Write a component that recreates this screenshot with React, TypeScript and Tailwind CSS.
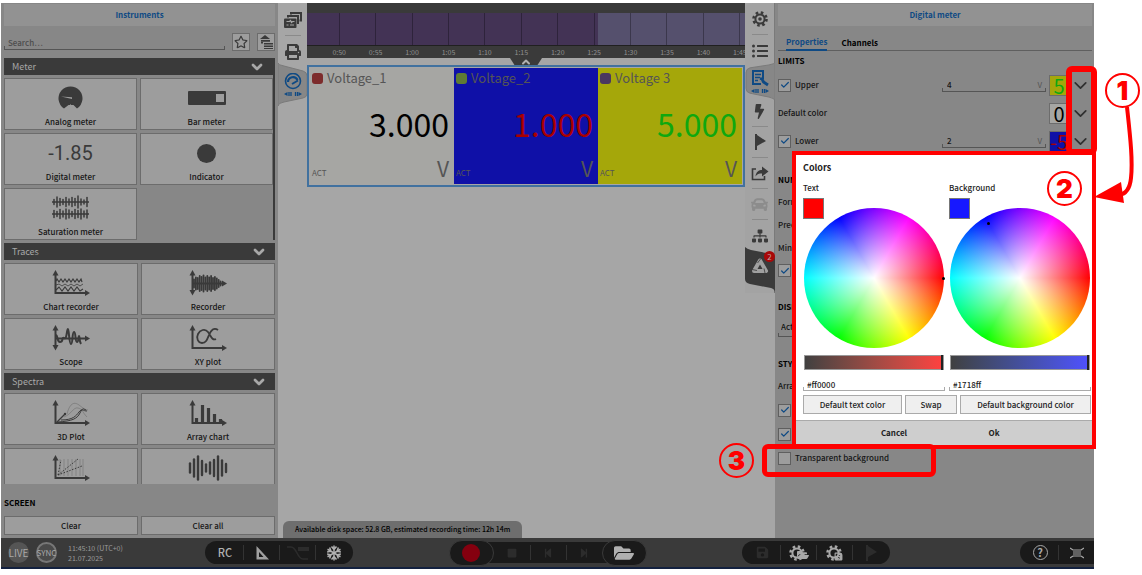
import { useState, type ReactNode } from "react";
import {
  FaBolt,
  FaCar,
  FaFolderOpen,
  FaListUl,
  FaPrint,
  FaRegStar,
  FaSave,
  FaSitemap,
  FaSquare,
  FaStepBackward,
  FaStepForward,
} from "react-icons/fa";
import { Check, ChevronDown, ChevronUp } from "lucide-react";

/* ------------------------------------------------------------------ */
/* Data                                                               */
/* ------------------------------------------------------------------ */

interface Instrument {
  name: string;
  icon: ReactNode;
  iconOnly?: boolean;
}

const TIMES = ["0:50", "0:55", "1:00", "1:05", "1:10", "1:15", "1:20", "1:25", "1:30", "1:35", "1:40", "1:45"];

const METERS = [
  { name: "Voltage_1", value: "3.000", panel: "bg-[#a6a6a3]", text: "text-black", dot: "bg-[#7d2c2c]" },
  { name: "Voltage_2", value: "1.000", panel: "bg-[#0f10a7]", text: "text-[#a80000]", dot: "bg-[#5f7b33]" },
  { name: "Voltage 3", value: "5.000", panel: "bg-[#a5a70a]", text: "text-[#0fa80f]", dot: "bg-[#4a3760]" },
];

const WHEEL =
  "bg-[radial-gradient(closest-side,#ffffff,#ffffff00),conic-gradient(from_90deg,#ff0000,#ffff00,#00ff00,#00ffff,#0000ff,#ff00ff,#ff0000)]";

// underline with short upright ends
const FIELD =
  "bg-no-repeat bg-[linear-gradient(#555555,#555555),linear-gradient(#555555,#555555),linear-gradient(#555555,#555555)] [background-size:1px_4px,1px_4px,100%_1px] [background-position:left_bottom,right_bottom,left_bottom]";
const FIELD_LIGHT =
  "bg-no-repeat bg-[linear-gradient(#aaaaaa,#aaaaaa),linear-gradient(#aaaaaa,#aaaaaa),linear-gradient(#aaaaaa,#aaaaaa)] [background-size:1px_4px,1px_4px,100%_1px] [background-position:left_bottom,right_bottom,left_bottom]";

/* ------------------------------------------------------------------ */
/* Icons                                                              */
/* ------------------------------------------------------------------ */

const Axes = ({ children, down }: { children?: ReactNode; down?: boolean }) => (
  <svg viewBox="0 0 38 26" className="w-[38px] h-[26px]" fill="none" stroke="#3a3a3a" strokeWidth="1.6">
    <path d={down ? "M3.500 3V22M3 13.500H34" : "M3.500 3V23H34"} strokeWidth="2" />
    <path d="M.5 5.500l3-5.500 3 5.500z" fill="#3a3a3a" stroke="none" />
    {down && <path d="M.5 20l3 5.500 3-5.500z" fill="#3a3a3a" stroke="none" />}
    <path d={down ? "M33 10.500l5 3-5 3z" : "M33 20l5 3-5 3z"} fill="#3a3a3a" stroke="none" />
    {children}
  </svg>
);

const Bars = ({ heights, cy, step = 4, width = 2.5 }: { heights: number[]; cy: number; step?: number; width?: number }) => (
  <>
    {heights.map((h, i) => (
      <path key={i} d={`M${2 + i * step} ${cy - h / 2}v${h}`} strokeWidth={width} strokeLinecap="round" />
    ))}
  </>
);

const AnalogIcon = () => (
  <svg viewBox="0 0 26 26" className="w-[26px] h-[26px]">
    <path d="M6 23.500A12 12 0 1 1 19 23.500L15.500 20l-2.500 0-2.500 0z" fill="#3a3a3a" />
    <path d="M8.500 26l4-7 4.500 7z" fill="#9d9d9d" />
    <path d="M3 11.500l11 .8v1.800z" fill="#9d9d9d" />
  </svg>
);

const BarIcon = () => (
  <svg viewBox="0 0 38 14" className="w-[38px] h-[14px]">
    <rect width="38" height="14" rx="1" fill="#3a3a3a" />
    <rect x="28" y="3" width="8" height="8" fill="#9d9d9d" />
  </svg>
);

const SaturationIcon = () => (
  <svg viewBox="0 0 38 26" className="w-[38px] h-[26px]" stroke="#3a3a3a">
    <path d="M0 7h37M0 19h37" strokeWidth="1.4" />
    <Bars heights={[5, 10, 7, 5, 9, 6, 9, 7, 12, 6, 4, 9]} cy={7} step={3} width={1.5} />
    <Bars heights={[7, 5, 9, 6, 10, 8, 5, 9, 7, 10, 6, 8]} cy={19} step={3} width={1.5} />
  </svg>
);

const ChartIcon = () => (
  <Axes>
    <path d="M4 11l1-2 2 3 2-3 2 3 2-3 2 3 2-3 2 3 2-3 2 3 2-3 2 3 2-3 1 3" strokeWidth="1.2" />
    <path d="M4 15l3-1 3 2 3-2 3 2 3-2 3 2 3-2 3 2 3-2" strokeWidth=".8" />
    <path d="M4 20l3-3 3 4 3-4 3 4 3-4 3 4 3-4 3 4 3-2" strokeWidth="1.1" />
  </Axes>
);

const RecorderIcon = () => (
  <Axes down>
    <g transform="translate(3 0)">
      <Bars heights={[8, 12, 11, 15, 13, 16, 12, 15, 12, 15, 11, 13, 10, 7, 4]} cy={13.5} step={1.9} width={1.8} />
    </g>
  </Axes>
);

const ScopeIcon = () => (
  <Axes down>
    <path d="M4 10c2 1 1 7 4 7s2-3 3-4 2 2 3-1 1-8 2-8 1 15 3 15 1-12 3-12 1 10 3 10 1-6 2-6 0 5 2 8" strokeWidth="2" />
  </Axes>
);

const XyIcon = () => (
  <Axes>
    <path d="M29 5c-4-3-7 0-9 5s-3 8-7 8-6-5-4-9 7-6 10-2 4 9 8 7" strokeWidth="1.8" />
  </Axes>
);

const PlotIcon = () => (
  <Axes>
    <path d="M4 23l9-9" strokeWidth="1.200" />
    <circle cx="13" cy="14" r="1.200" fill="#3a3a3a" stroke="none" />
    <path d="M6 22c14-1 19-3 22-9s3-4 6-3M9 20c12 0 15-4 18-8s4-1 8-1" strokeWidth="1" />
    <path d="M15 14c3-12 8-12 12-9s6 5 9 5M12 17c8-3 9-10 14-9s4 4 9 9" strokeWidth=".6" opacity=".45" />
  </Axes>
);

const ArrayIcon = () => (
  <Axes>
    <path d="M7.500 22v-4M13.500 22V5M19.500 22V8M25.500 22v-8M31.500 22v-3" strokeWidth="3.200" />
  </Axes>
);

const SpectrogramIcon = () => (
  <Axes>
    <path d="M8 4v17M12 4v17M16 4v17M20 4v17M24 4v17M28 4v17M31 4v17" strokeWidth=".5" opacity=".5" />
    <path d="M6 20l20-16M6 20l24-9M6 20L9 5" strokeWidth="1" strokeDasharray="1.500 1.500" />
  </Axes>
);

const WaveIcon = () => (
  <svg viewBox="0 0 40 26" className="w-10 h-[26px]" stroke="#3a3a3a">
    <Bars heights={[9, 17, 23, 14, 7, 11, 16, 23, 15, 8]} cy={13} step={4} width={2.4} />
  </svg>
);

const GearIcon = ({ dot }: { dot?: boolean }) => (
  <svg viewBox="0 0 16 16" className="size-4" fill="none" stroke="currentColor">
    <circle cx="8" cy="8" r="6.500" strokeWidth="2.600" strokeDasharray="2.550 2.555" />
    <circle cx="8" cy="8" r="4.600" strokeWidth="2" />
    {dot && <circle cx="8" cy="8" r="1.800" fill="currentColor" stroke="none" />}
  </svg>
);

const WindowsIcon = () => (
  <svg viewBox="0 0 18 16" className="w-[18px] h-4 shrink-0" fill="none" stroke="#3a3a3a" strokeWidth="2">
    <path d="M7 2.500V1h10v7.500h-1.500M4 5.500V4h10V11H13" />
    <rect x="0" y="6.500" width="12.500" height="9.500" rx="1" fill="#3a3a3a" stroke="none" />
    <path d="M2.500 9.500h3l1-1 1 2 1-1h2M2.500 13h2M6 13h4" stroke="#a6a6a6" strokeWidth="1.200" />
  </svg>
);

const GaugeIcon = () => (
  <svg viewBox="0 0 18 24" className="w-[18px] h-6" fill="none" stroke="#0f4a84">
    <circle cx="9" cy="8" r="7.500" strokeWidth="1.600" />
    <path d="M4 9a5 5 0 0 1 9.500-2" strokeWidth="2.200" />
    <path d="M8 11l6-3.500" strokeWidth="2" />
    <path d="M0 21l3.500-2v4zM18 21l-3.500-2v4z" fill="#0f4a84" stroke="none" />
    <path d="M5 19v4M7 19v4M11.500 19v4M13.500 19v4" strokeWidth="1.300" />
  </svg>
);

const FormIcon = () => (
  <svg viewBox="0 0 18 24" className="w-[18px] h-6" fill="none" stroke="#0f4a84">
    <path d="M12 9V1H2v13h8" strokeWidth="2" />
    <path d="M4 4.500h6M4 7.500h5M4 10.500h3" strokeWidth="1.400" />
    <path d="M9 8.500l2 .5 1.500 3 4.500 3" strokeWidth="2.800" />
    <path d="M0 21l3.500-2v4zM18 21l-3.500-2v4z" fill="#0f4a84" stroke="none" />
    <path d="M5 19v4M7 19v4M11.500 19v4M13.500 19v4" strokeWidth="1.300" />
  </svg>
);

const FlagIcon = () => (
  <svg viewBox="0 0 12 16" className="h-4 w-3" fill="currentColor">
    <path d="M1 0h2v16H1zM3 1l9 6-9 5z" />
  </svg>
);

const ShareIcon = () => (
  <svg viewBox="0 0 18 16" className="w-[18px] h-4 shrink-0" fill="none" stroke="#3a3a3a">
    <path d="M5 4H1.500v10.500h12V11" strokeWidth="1.600" />
    <path d="M4.500 11.500C5 6.500 8 5 11 5V1.500l6.500 5-6.500 5V8.500c-3 0-5 .5-6.500 3z" fill="#3a3a3a" stroke="none" />
  </svg>
);

const TriangleIcon = () => (
  <svg viewBox="0 0 14 14" className="size-3.5" fill="#a0a0a0" fillRule="evenodd">
    <path d="M1.500 0L14 13.500H1.500zM4 6v5h4.500z" />
  </svg>
);

const FilterIcon = () => (
  <svg viewBox="0 0 22 14" className="w-[22px] h-3.5" fill="none" stroke="#2c2c2c">
    <path d="M0 1h4c6 0 6 12 12 12h5" strokeWidth="1.500" />
    <path d="M11 3h11" strokeWidth="4" />
  </svg>
);

const SnowIcon = () => (
  <svg viewBox="0 0 16 16" className="size-4" fill="none" stroke="#b0b0b0">
    {[0, 60, 120].map((a) => (
      <path key={a} transform={`rotate(${a} 8 8)`} d="M8 .5v15M5.500 1.500L8 4.500l2.500-3M5.500 14.500l2.500-3 2.500 3" strokeWidth="1.500" />
    ))}
  </svg>
);

const LogoIcon = () => (
  <svg viewBox="0 0 18 16" className="w-[18px] h-4" fill="none">
    <path d="M9 2.500L15 13H3z" stroke="#a0a0a0" strokeWidth="4" strokeLinejoin="round" />
    <path d="M9.500 1l-3 4M14 15l-1-4.500M1 11.500l5 1" stroke="#3a3a3a" strokeWidth=".8" />
  </svg>
);

const FrameIcon = () => (
  <svg viewBox="0 0 14 12" className="w-3.5 h-3" fill="none" stroke="#a8a8a8" strokeWidth="1.200">
    <path d="M3 3h8M3 5h8M3 7h8M3 9h8M0 1l3 2M14 1l-3 2M0 11l3-2M14 11l-3-2" />
  </svg>
);

const TreeIcon = () => (
  <svg viewBox="0 0 14 14" className="size-3.5" fill="#3a3a3a">
    <path d="M1 4l5-4 5 4zM2 5h9v1.800H2zM5 8h9v1.500H5zM5 10.500h9V12H5zM5 13h9v1H5zM2 7h2v1.500H2z" />
  </svg>
);

/* ------------------------------------------------------------------ */
/* Instruments panel                                                  */
/* ------------------------------------------------------------------ */

const GROUPS: { title: string; items: Instrument[] }[] = [
  {
    title: "Meter",
    items: [
      { name: "Analog meter", icon: <AnalogIcon /> },
      { name: "Bar meter", icon: <BarIcon /> },
      {
        name: "Digital meter",
        icon: (
          <span className="font-['Liberation_Sans_Narrow','Roboto',sans-serif] text-[20px] leading-5 font-normal text-[#3a3a3a]">
            -1.85
          </span>
        ),
      },
      { name: "Indicator", icon: <span className="size-[19px] rounded-full bg-[#3a3a3a]" /> },
      { name: "Saturation meter", icon: <SaturationIcon /> },
    ],
  },
  {
    title: "Traces",
    items: [
      { name: "Chart recorder", icon: <ChartIcon /> },
      { name: "Recorder", icon: <RecorderIcon /> },
      { name: "Scope", icon: <ScopeIcon /> },
      { name: "XY plot", icon: <XyIcon /> },
    ],
  },
  {
    title: "Spectra",
    items: [
      { name: "3D Plot", icon: <PlotIcon /> },
      { name: "Array chart", icon: <ArrayIcon /> },
      { name: "Spectrogram", icon: <SpectrogramIcon />, iconOnly: true },
      { name: "Waveform", icon: <WaveIcon />, iconOnly: true },
    ],
  },
];

function InstrumentsPanel() {
  const small = "flex size-[18px] items-center justify-center border border-[#6c6c6c] bg-[#9d9d9d] text-[#3a3a3a]";
  return (
    <aside className="flex w-[277px] shrink-0 flex-col bg-[#878787] px-[3px] pt-px pb-[3px] text-[8px] leading-[14px] font-medium text-[#151515]">
      <h2 className="bg-[#929292] text-center leading-[22px] font-bold text-[#0f4a84]">Instruments</h2>
      <div className="mt-[7px] flex items-center gap-[7px]">
        <input
          aria-label="Search"
          placeholder="Search…"
          className={`h-4 min-w-0 flex-1 pl-1 outline-none placeholder:text-[#4c4c4c] ${FIELD}`}
        />
        <button aria-label="Favorites" className={small}>
          <FaRegStar size={14} />
        </button>
        <button aria-label="Collapse" className={small}>
          <TreeIcon />
        </button>
      </div>
      <div className="mt-[7px] flex min-h-0 flex-1 flex-col gap-[3px] overflow-hidden">
        {GROUPS.map((group) => (
          <section
            key={group.title}
            className={`flex shrink-0 flex-col gap-[3px] ${group.title === "Meter" ? "border-r-2 border-[#3a3a3a]" : ""}`}
          >
            <button className="flex h-[17px] items-center justify-between bg-[#3a3a3a] px-2 text-[9px] font-normal text-[#a8a8a8]">
              {group.title}
              <ChevronDown size={16} strokeWidth={4} />
            </button>
            <div className="grid grid-cols-2 gap-[3px]">
              {group.items.map((item) => (
                <button
                  key={item.name}
                  aria-label={item.name}
                  className="flex h-[52px] flex-col items-center gap-[2px] border border-[#6c6c6c] bg-[#9d9d9d] pt-1"
                >
                  <span className="flex h-[30px] items-center">{item.icon}</span>
                  {!item.iconOnly && item.name}
                </button>
              ))}
            </div>
          </section>
        ))}
      </div>
      <h3 className="mt-3 font-bold text-black">SCREEN</h3>
      <div className="mt-[6px] grid grid-cols-2 gap-[3px]">
        {["Clear", "Clear all"].map((label) => (
          <button key={label} className="h-[19px] border border-[#6c6c6c] bg-[#9d9d9d]">
            {label}
          </button>
        ))}
      </div>
    </aside>
  );
}

/* ------------------------------------------------------------------ */
/* Side tabs                                                          */
/* ------------------------------------------------------------------ */

const SideButton = ({ label, last, children }: { label: string; last?: boolean; children: ReactNode }) => (
  <button
    aria-label={label}
    className={`flex h-[31px] w-4 items-center justify-center text-[#3a3a3a] ${last ? "" : "border-b border-[#8a8a8a]"}`}
  >
    {children}
  </button>
);

function LeftTabs() {
  return (
    <nav className="flex w-[29px] shrink-0 flex-col items-center pt-[2px]">
      <SideButton label="Screens">
        <WindowsIcon />
      </SideButton>
      <SideButton label="Print" last>
        <FaPrint size={16} className="shrink-0" />
      </SideButton>
      <button aria-label="Instruments" className="relative -mt-1 flex h-[43px] w-full items-center justify-center">
        <svg viewBox="0 0 29 43" className="absolute inset-0 size-full">
          <path d="M0 0Q0 2 6 3L25 8Q29 9 29 13V31Q29 34 25 35L6 39Q0 40 0 43Z" fill="#878787" stroke="#7a7a7a" />
        </svg>
        <span className="relative">
          <GaugeIcon />
        </span>
      </button>
    </nav>
  );
}

function RightTabs() {
  return (
    <nav className="flex w-[30px] shrink-0 flex-col items-center rounded-tl-lg border-r border-[#7a7a7a] bg-[#a3a3a3] pt-px">
      <SideButton label="Settings">
        <GearIcon dot />
      </SideButton>
      <SideButton label="List" last>
        <FaListUl size={16} className="shrink-0" />
      </SideButton>
      <button aria-label="Properties" className="relative -mt-1 -mr-px flex h-[39px] w-[30px] items-center justify-center">
        <svg viewBox="0 0 30 40" preserveAspectRatio="none" className="absolute inset-0 size-full">
          <path d="M30 0Q30 2 24 3L5 6Q1 7 1 11V27Q1 31 5 32L24 36Q30 37 30 40Z" fill="#878787" stroke="#7a7a7a" />
        </svg>
        <span className="relative">
          <FormIcon />
        </span>
      </button>
      <div className="relative -mt-[5px] flex flex-col items-center">
        <SideButton label="Triggers">
          <FaBolt size={15} />
        </SideButton>
        <SideButton label="Markers">
          <FlagIcon />
        </SideButton>
        <SideButton label="Export">
          <ShareIcon />
        </SideButton>
        <SideButton label="Vehicle">
          <FaCar size={17} className="shrink-0 text-[#8c8c8c]" />
        </SideButton>
        <SideButton label="Network" last>
          <FaSitemap size={16} className="shrink-0" />
        </SideButton>
      </div>
      <button aria-label="Notifications" className="relative -mt-1 -mr-px flex h-[46px] w-[30px] items-center justify-center">
        <svg viewBox="0 0 30 46" className="absolute inset-0 size-full">
          <path d="M0 0Q2 2 6 3L26 7Q30 8 30 12V46Q30 42 26 41L5 37Q0 36 0 32Z" fill="#3a3a3a" />
        </svg>
        <span className="relative -mt-2">
          <LogoIcon />
        </span>
        <span className="absolute top-1 right-0 flex size-[11px] items-center justify-center rounded-full bg-[#a80808] text-[8px] text-[#c0a0a0]">
          2
        </span>
      </button>
    </nav>
  );
}

/* ------------------------------------------------------------------ */
/* Measuring screen                                                   */
/* ------------------------------------------------------------------ */

function Timeline() {
  return (
    <div className="h-[55px] overflow-hidden bg-[#3a3a3a] pt-[10px]">
      <div className="flex h-[33px] border-b border-[#202020] bg-[linear-gradient(90deg,#433355_66.5%,#55506d_66.5%)]">
        <div className="w-[33px] border-r border-black/30" />
        {TIMES.slice(1).map((t) => (
          <div key={t} className="flex-1 border-r border-black/30" />
        ))}
        <div className="w-[5px]" />
      </div>
      <div className="-mr-[13px] flex pt-px pl-[14px] text-[7px] leading-[10px] text-[#909090]">
        {TIMES.map((t) => (
          <span key={t} className="flex-1 text-center">
            {t}
          </span>
        ))}
      </div>
    </div>
  );
}

function MeterWidget() {
  return (
    <div className="grid h-[122px] grid-cols-3 border-2 border-[#41719f] p-px">
      {METERS.map((m) => (
        <section key={m.name} className={`flex flex-col px-[2px] ${m.panel}`}>
          <div className="flex h-5 items-center gap-1 text-[13px] text-[#555555]">
            <span className={`size-[11px] rounded-[3px] ${m.dot}`} />
            {m.name}
          </div>
          <p className={`mt-2 pr-[3px] text-right text-[32px] leading-[54px] ${m.text}`}>{m.value}</p>
          <div className="mt-[6px] flex items-end justify-between text-[#555555]">
            <span className="text-[8px] leading-[14px]">ACT</span>
            <span className="pr-[3px] text-[21px] leading-6">V</span>
          </div>
        </section>
      ))}
    </div>
  );
}

function Workspace() {
  return (
    <main className="flex min-w-0 flex-1 flex-col bg-[#a6a6a6]">
      <div className="flex flex-1 items-start">
        <LeftTabs />
        <div className="min-w-0 flex-1">
          <Timeline />
          <button
            aria-label="Collapse overview"
            className="mx-auto flex h-[7px] w-8 items-center justify-center bg-[#3a3a3a] text-[#b0b0b0] [clip-path:polygon(0_0,100%_0,86%_100%,14%_100%)]"
          >
            <ChevronUp size={12} strokeWidth={4} />
          </button>
          <MeterWidget />
        </div>
        <RightTabs />
      </div>
      <p className="ml-[5px] self-start rounded-t-md bg-[#6e6e6e] px-3 text-[7px] leading-[17px] font-medium text-black">
        Available disk space: 52.8 GB, estimated recording time: 12h 14m
      </p>
    </main>
  );
}

/* ------------------------------------------------------------------ */
/* Properties panel                                                   */
/* ------------------------------------------------------------------ */

const Tick = ({ label, checked = true }: { label: string; checked?: boolean }) => (
  <label className="flex items-center gap-1">
    <span className="grid size-[13px] place-items-center">
      <input
        type="checkbox"
        defaultChecked={checked}
        className="peer col-start-1 row-start-1 size-[13px] appearance-none border border-[#5f5f5f] bg-[#9d9d9d]"
      />
      <Check
        size={10}
        strokeWidth={3}
        className="pointer-events-none invisible col-start-1 row-start-1 text-[#0f4a84] peer-checked:visible"
      />
    </span>
    {label}
  </label>
);

interface LimitProps {
  name: string;
  value?: string;
  sample: string;
  swatch: string;
}

const Limit = ({ name, value, sample, swatch }: LimitProps) => (
  <div className="flex h-[28px] items-center">
    <div className="flex-1">{value ? <Tick label={name} /> : name}</div>
    {value && (
      <div className={`mr-[3px] flex w-[104px] items-center pr-1 pb-px pl-[5px] ${FIELD}`}>
        <input
          aria-label={`${name} limit`}
          defaultValue={value}
          className="h-[13px] min-w-0 flex-1 bg-transparent outline-none"
        />
        <span className="leading-3 font-normal text-[#555555]">V</span>
      </div>
    )}
    <button
      aria-label={`${name} color`}
      className={`flex h-[21px] w-5 items-center justify-center border border-[#6c6c6c] text-[20px] leading-[19px] font-normal ${swatch}`}
    >
      {sample}
    </button>
    <button aria-label={`Edit ${name} color`} className="flex w-[23px] justify-center text-[#303030]">
      <ChevronDown size={21} />
    </button>
  </div>
);

const Heading = ({ children }: { children: ReactNode }) => (
  <h3 className="h-5 leading-5 font-bold text-black">{children}</h3>
);

function PropertiesPanel() {
  return (
    <aside className="relative flex w-[319px] shrink-0 flex-col bg-[#878787] pt-px pr-[2px] pl-[3px] text-[8px] leading-[14px] font-medium text-[#151515]">
      <h2 className="bg-[#929292] text-center leading-[22px] font-bold text-[#0f4a84]">Digital meter</h2>
      <div className="mt-[9px] flex gap-[14px] border-b border-[#5f5f5f] pl-2 font-bold">
        <button className="-mb-px border-b-2 border-[#0f4a84] text-[#0f4a84]">Properties</button>
        <button className="text-black">Channels</button>
      </div>
      <Heading>LIMITS</Heading>
      <Limit name="Upper" value="4" sample="5" swatch="bg-[#a5a70a] text-[#0fa80f]" />
      <Limit name="Default color" sample="0" swatch="bg-[#a6a6a3] text-black" />
      <Limit name="Lower" value="2" sample="-5" swatch="bg-[#0f10a7] text-[#a80000]" />
      <div className="mt-[15px]">
        <Heading>NUMBERS</Heading>
        <div className="flex flex-col *:h-[23px] *:leading-[23px]">
          <p>Format</p>
          <p>Precision</p>
          <p>Minimum</p>
          <Tick label="Unit" />
        </div>
      </div>
      <div className="mt-[15px]">
        <Heading>DISPLAY</Heading>
        <select aria-label="Display value" className={`h-5 w-full appearance-none pl-[3px] ${FIELD}`}>
          <option>Actual</option>
        </select>
      </div>
      <div className="mt-[17px]">
        <Heading>STYLE</Heading>
        <div className="flex flex-col *:h-6 *:leading-6">
          <p>Arrangement</p>
          <Tick label="Header" />
          <Tick label="Footer" />
          <Tick label="Transparent background" checked={false} />
        </div>
      </div>
      <ColorDialog />
      <div className="pointer-events-none absolute top-[63px] -right-[3px] z-20 h-[89px] w-[31px] rounded-md border-[6px] border-[#ff0000]" />
      <div className="pointer-events-none absolute top-[441px] -left-[13px] z-20 h-[33px] w-[174px] rounded-md border-[5px] border-[#ff0000]" />
    </aside>
  );
}

/* ------------------------------------------------------------------ */
/* Color dialog                                                       */
/* ------------------------------------------------------------------ */

interface PickerProps {
  label: string;
  color: string;
  onChange: (c: string) => void;
  track: string;
  marker: string;
}

const ColorPicker = ({ label, color, onChange, track, marker }: PickerProps) => (
  <div className="w-[142px]">
    <p>{label}</p>
    <div className="mt-[3px] size-[21px] border border-[#777777]" style={{ backgroundColor: color }} />
    <div className={`relative -mt-[11px] ml-px size-[140px] rounded-full ${WHEEL}`}>
      <span className={`absolute size-[3px] rounded-full bg-black ${marker}`} />
    </div>
    <input
      type="range"
      aria-label={`${label} brightness`}
      defaultValue={100}
      className={`mt-[7px] ml-px block h-[15px] w-[140px] appearance-none border border-[#999999] [&::-webkit-slider-thumb]:h-[15px] [&::-webkit-slider-thumb]:w-[2px] [&::-webkit-slider-thumb]:appearance-none [&::-webkit-slider-thumb]:bg-[#222222] ${track}`}
    />
    <input
      aria-label={`${label} hex value`}
      value={color}
      onChange={(e) => onChange(e.target.value)}
      className={`mt-[7px] block h-[14px] w-full pl-1 leading-3 outline-none ${FIELD_LIGHT}`}
    />
  </div>
);

function ColorDialog() {
  const [text, setText] = useState("#ff0000");
  const [background, setBackground] = useState("#1718ff");
  const button = "h-[19px] border border-[#aaaaaa] bg-[#efefef]";

  const swap = () => {
    setText(background);
    setBackground(text);
  };

  return (
    <div
      role="dialog"
      aria-label="Colors"
      className="absolute top-[148px] -right-[2px] z-10 w-[304px] border-4 border-[#ff0000] bg-white text-[#222222]"
    >
      <div className="pt-[5px] pr-px pb-[6px] pl-[7px]">
        <h2 className="text-[9px] leading-4 font-bold">Colors</h2>
        <div className="mt-[5px] flex gap-1">
          <ColorPicker
            label="Text"
            color={text}
            onChange={setText}
            track="bg-linear-to-r from-[#404040] to-[#ff4040]"
            marker="top-[69px] -right-px"
          />
          <ColorPicker
            label="Background"
            color={background}
            onChange={setBackground}
            track="bg-linear-to-r from-[#404040] to-[#5050ff]"
            marker="top-[14px] left-[37px]"
          />
        </div>
        <div className="mt-1 flex gap-[3px]">
          <button className={`${button} w-[99px]`} onClick={() => setText("#ff0000")}>
            Default text color
          </button>
          <button className={`${button} w-[52px]`} onClick={swap}>
            Swap
          </button>
          <button className={`${button} flex-1`} onClick={() => setBackground("#1718ff")}>
            Default background color
          </button>
        </div>
      </div>
      <div className="grid h-[25px] grid-cols-[100px_100px] justify-center border-t border-[#aaaaaa] bg-[#cecece] font-bold">
        <button>Cancel</button>
        <button>Ok</button>
      </div>
    </div>
  );
}

/* ------------------------------------------------------------------ */
/* Footer                                                             */
/* ------------------------------------------------------------------ */

const BarButton = ({ label, children }: { label: string; children: ReactNode }) => (
  <button
    aria-label={label}
    className="flex h-[15px] w-9 items-center justify-center border-l border-[#333333] text-[#2c2c2c] first:border-l-0"
  >
    {children}
  </button>
);

function Footer() {
  const round = "z-10 flex h-[26px] w-[45px] items-center justify-center rounded-full border border-[#3a3a3a] bg-[#1a1a1a]";
  return (
    <footer className="flex h-[31px] shrink-0 items-center border-b-2 border-[#13213f] bg-[#3a3a3a]">
      <div className="flex w-[204px] shrink-0 items-center gap-[7px] pl-[7px] text-[#9a9a9a]">
        <button className="size-[21px] rounded-full bg-[#555555] text-[10px] text-[#a8a8a8]">LIVE</button>
        <button className="flex size-[21px] items-center justify-center rounded-full border-2 border-[#777777] bg-[#4a4a4a] text-[8px] text-[#a8a8a8]">
          SYNC
        </button>
        <p className="pl-1 text-[7px] leading-[10px]">
          11:45:10 (UTC+0)
          <br />
          21.07.2025
        </p>
      </div>
      <div className="flex h-[23px] items-center rounded-full bg-[#1a1a1a] px-[2px]">
        <BarButton label="Remote control">
          <span className="text-[11px] font-medium text-[#b0b0b0]">RC</span>
        </BarButton>
        <BarButton label="Scale">
          <TriangleIcon />
        </BarButton>
        <BarButton label="Filter">
          <FilterIcon />
        </BarButton>
        <BarButton label="Freeze">
          <SnowIcon />
        </BarButton>
      </div>
      <div className="flex-1" />
      <div className="flex items-center">
        <button aria-label="Record" className={round}>
          <span className="size-[18px] rounded-full bg-[#85000f]" />
        </button>
        <div className="-mx-3 flex h-[21px] items-center bg-[#1a1a1a] px-3">
          <BarButton label="Stop">
            <FaSquare size={10} />
          </BarButton>
          <BarButton label="Previous">
            <FaStepBackward size={10} />
          </BarButton>
          <BarButton label="Next">
            <FaStepForward size={10} />
          </BarButton>
        </div>
        <button aria-label="Open" className={round}>
          <FaFolderOpen size={20} className="text-[#b0b0b0]" />
        </button>
      </div>
      <div className="flex-1" />
      <div className="flex h-[23px] items-center rounded-full bg-[#1a1a1a] px-[2px]">
        <BarButton label="Save">
          <FaSave size={13} />
        </BarButton>
        <BarButton label="Load setup">
          <span className="flex items-end text-[#a8a8a8]">
            <GearIcon />
            <FaFolderOpen size={12} className="-ml-2" />
          </span>
        </BarButton>
        <BarButton label="Save setup">
          <span className="flex items-end text-[#a8a8a8]">
            <GearIcon />
            <FaSave size={9} className="-ml-2" />
          </span>
        </BarButton>
        <BarButton label="Marker">
          <FlagIcon />
        </BarButton>
      </div>
      <div className="flex w-[204px] shrink-0 justify-end">
        <div className="flex h-[23px] items-center rounded-l-full bg-[#1a1a1a] pl-[2px]">
          <BarButton label="Help">
            <span className="flex size-[15px] items-center justify-center rounded-full border border-[#a8a8a8] text-[11px] leading-none font-bold text-[#a8a8a8]">
              ?
            </span>
          </BarButton>
          <BarButton label="Fullscreen">
            <FrameIcon />
          </BarButton>
        </div>
      </div>
    </footer>
  );
}

/* ------------------------------------------------------------------ */
/* Callouts                                                           */
/* ------------------------------------------------------------------ */

const Callout = ({ n, place }: { n: number; place: string }) => (
  <span
    className={`pointer-events-none absolute z-30 flex size-[35px] items-center justify-center rounded-full border-2 border-[#ff0000] font-['Inter',sans-serif] text-[26px] leading-none font-black text-[#ff0000] ${place}`}
  >
    {n}
  </span>
);

export default function App() {
  return (
    <div className="relative flex h-screen flex-col overflow-hidden bg-white pt-[3px] pr-12 pb-[6px] pl-px font-['Noto_Sans_CJK_SC',sans-serif]">
      <div className="flex min-h-0 flex-1">
        <InstrumentsPanel />
        <Workspace />
        <PropertiesPanel />
      </div>
      <Footer />

      <Callout n={1} place="top-[73px] right-[2px]" />
      <Callout n={2} place="top-[171px] right-[60px]" />
      <Callout n={3} place="top-[443px] right-[388px]" />
      <svg viewBox="0 0 52 110" className="pointer-events-none absolute top-[100px] right-0 z-20 h-[110px] w-[52px]">
        <path d="M37 7C40 35 43 60 41 78C40 88 36 94 29 95" fill="none" stroke="#ff0000" strokeWidth="4" />
        <path d="M4 97L31 82L34 103Z" fill="#ff0000" />
      </svg>
    </div>
  );
}
